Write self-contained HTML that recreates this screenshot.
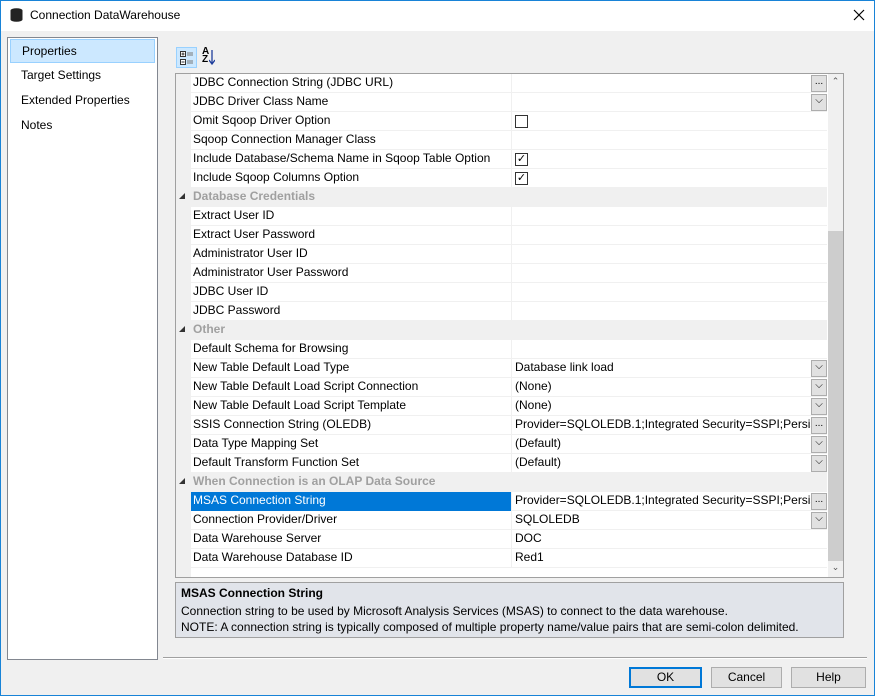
<!DOCTYPE html>
<html><head><style>
*{box-sizing:border-box;margin:0;padding:0}
body{width:875px;height:696px;overflow:hidden;font-family:"Liberation Sans",sans-serif;font-size:12px;color:#000;background:#f0f0f0;position:relative}
.win{position:absolute;left:0;top:0;width:875px;height:696px;background:#f0f0f0}
.frame{position:absolute;left:0;top:0;width:875px;height:696px;border:1px solid #1883d7;pointer-events:none}
.title{position:absolute;left:0;top:0;width:875px;height:31px;background:#fff}
.title span{position:absolute;left:30px;top:8px;font-size:12px}
.list{position:absolute;left:7px;top:37px;width:151px;height:623px;background:#fff;border:1px solid #828790}
.list div{height:25px;line-height:25px;padding-left:13px}
.list .sel{margin:1px 2px 0 2px;height:24px;background:#cce8ff;border:1px solid #99d1ff;padding-left:11px;line-height:22px}
.grid{position:absolute;left:175px;top:73px;width:669px;height:505px;background:#fff;border:1px solid #a0a0a0;overflow:hidden}
.margin{position:absolute;left:0;top:0;width:15px;height:503px;background:#f0f0f0}
.row{position:absolute;left:15px;width:636px;height:19px;border-bottom:1px solid #f0f0f0}
.row .n{position:absolute;left:2px;top:1px;white-space:nowrap}
.row .v{position:absolute;left:320px;top:0;width:316px;height:19px;border-left:1px solid #f0f0f0;padding-left:3px;padding-top:1px;white-space:nowrap;overflow:hidden}
.cat{background:#f0f0f0;border-bottom:none}
.cat .n{color:#a0a0a0;font-weight:bold}
.tri{position:absolute;left:-12px;top:5px;width:0;height:0;border-left:6px solid transparent;border-bottom:6px solid #333}
.sel .n{color:#fff}
.selbg{position:absolute;left:0;top:0;width:320px;height:19px;background:#0078d7}
.btn{position:absolute;right:0;top:1px;width:16px;height:17px;background:#e1e1e1;border:1px solid #adadad;font-size:10px;text-align:center;line-height:12px}
.cb{position:absolute;left:3px;top:3px;width:13px;height:13px;border:1px solid #333;background:#fff}
.sb{position:absolute;left:652px;top:0;width:15px;height:503px;background:#f0f0f0}
.thumb{position:absolute;left:0;top:157px;width:15px;height:330px;background:#cdcdcd}
.desc{position:absolute;left:175px;top:582px;width:669px;height:56px;background:#e1e4ea;border:1px solid #a0a0a0}
.desc b{position:absolute;left:5px;top:3px}
.desc p{position:absolute;left:5px;white-space:nowrap}
.sep{position:absolute;left:163px;top:657px;width:704px;height:2px;border-top:1px solid #a0a0a0;border-bottom:1px solid #fff}
.b{position:absolute;top:667px;height:21px;background:#e1e1e1;border:1px solid #adadad;text-align:center;line-height:19px}
</style></head><body><div class="win">
<div class="title">
<svg style="position:absolute;left:10px;top:8px" width="13" height="14" viewBox="0 0 13 14"><ellipse cx="6.5" cy="2.5" rx="6" ry="2.3" fill="#222"/><rect x="0.5" y="2.5" width="12" height="9" fill="#222"/><ellipse cx="6.5" cy="11.5" rx="6" ry="2.3" fill="#222"/></svg>
<span>Connection DataWarehouse</span>
<svg style="position:absolute;left:853px;top:9px" width="12" height="12"><path d="M1 1l10 10M11 1L1 11" stroke="#000" stroke-width="1.2"/></svg></div>
<div class="list"><div class="sel">Properties</div><div>Target Settings</div><div>Extended Properties</div><div>Notes</div></div>
<div style="position:absolute;left:176px;top:47px;width:21px;height:21px;background:#cce8ff;border:1px solid #99d1ff"></div>
<svg style="position:absolute;left:180px;top:51px" width="14" height="14" viewBox="0 0 14 14"><rect x="0.5" y="0.5" width="5" height="5" fill="#fff" stroke="#333"/><path d="M1.5 3h3M3 1.5v3" stroke="#333"/><rect x="0.5" y="8.5" width="5" height="5" fill="#fff" stroke="#333"/><path d="M1.5 11h3" stroke="#333"/><path d="M7 2h6M7 4h6M7 10h6M7 12h6" stroke="#777"/></svg>
<div style="position:absolute;left:202px;top:48px;font-size:10px;line-height:8px;font-weight:bold">A<br>Z</div>
<svg style="position:absolute;left:209px;top:50px" width="6" height="16"><path d="M3 0v13M0 10l3 4 3-4" stroke="#1f3e9c" stroke-width="1.3" fill="none"/></svg>
<div class="grid"><div class="margin"></div>
<div class="row" style="top:0"><span class="n">JDBC Connection String (JDBC URL)</span><div class="v"><div class="btn">...</div></div></div>
<div class="row" style="top:19px"><span class="n">JDBC Driver Class Name</span><div class="v"><div class="btn">⌵</div></div></div>
<div class="row" style="top:38px"><span class="n">Omit Sqoop Driver Option</span><div class="v"><div class="cb"></div></div></div>
<div class="row" style="top:57px"><span class="n">Sqoop Connection Manager Class</span><div class="v"></div></div>
<div class="row" style="top:76px"><span class="n">Include Database/Schema Name in Sqoop Table Option</span><div class="v"><div class="cb" style="font-size:11px;line-height:11px;text-align:center">✓</div></div></div>
<div class="row" style="top:95px"><span class="n">Include Sqoop Columns Option</span><div class="v"><div class="cb" style="font-size:11px;line-height:11px;text-align:center">✓</div></div></div>
<div class="row cat" style="top:114px"><div class="tri"></div><span class="n">Database Credentials</span></div>
<div class="row" style="top:133px"><span class="n">Extract User ID</span><div class="v"></div></div>
<div class="row" style="top:152px"><span class="n">Extract User Password</span><div class="v"></div></div>
<div class="row" style="top:171px"><span class="n">Administrator User ID</span><div class="v"></div></div>
<div class="row" style="top:190px"><span class="n">Administrator User Password</span><div class="v"></div></div>
<div class="row" style="top:209px"><span class="n">JDBC User ID</span><div class="v"></div></div>
<div class="row" style="top:228px"><span class="n">JDBC Password</span><div class="v"></div></div>
<div class="row cat" style="top:247px"><div class="tri"></div><span class="n">Other</span></div>
<div class="row" style="top:266px"><span class="n">Default Schema for Browsing</span><div class="v"></div></div>
<div class="row" style="top:285px"><span class="n">New Table Default Load Type</span><div class="v">Database link load<div class="btn">⌵</div></div></div>
<div class="row" style="top:304px"><span class="n">New Table Default Load Script Connection</span><div class="v">(None)<div class="btn">⌵</div></div></div>
<div class="row" style="top:323px"><span class="n">New Table Default Load Script Template</span><div class="v">(None)<div class="btn">⌵</div></div></div>
<div class="row" style="top:342px"><span class="n">SSIS Connection String (OLEDB)</span><div class="v">Provider=SQLOLEDB.1;Integrated Security=SSPI;Persist Security<div class="btn">...</div></div></div>
<div class="row" style="top:361px"><span class="n">Data Type Mapping Set</span><div class="v">(Default)<div class="btn">⌵</div></div></div>
<div class="row" style="top:380px"><span class="n">Default Transform Function Set</span><div class="v">(Default)<div class="btn">⌵</div></div></div>
<div class="row cat" style="top:399px"><div class="tri"></div><span class="n">When Connection is an OLAP Data Source</span></div>
<div class="row sel" style="top:418px"><div class="selbg"></div><span class="n">MSAS Connection String</span><div class="v">Provider=SQLOLEDB.1;Integrated Security=SSPI;Persist Security<div class="btn">...</div></div></div>
<div class="row" style="top:437px"><span class="n">Connection Provider/Driver</span><div class="v">SQLOLEDB<div class="btn">⌵</div></div></div>
<div class="row" style="top:456px"><span class="n">Data Warehouse Server</span><div class="v">DOC</div></div>
<div class="row" style="top:475px"><span class="n">Data Warehouse Database ID</span><div class="v">Red1</div></div>
<div class="sb"><div style="position:absolute;top:2px;width:15px;text-align:center;font-size:9px;color:#555">⌃</div><div class="thumb"></div><div style="position:absolute;top:488px;width:15px;text-align:center;font-size:9px;color:#555">⌄</div></div>
</div>
<div class="desc"><b>MSAS Connection String</b><p style="top:21px">Connection string to be used by Microsoft Analysis Services (MSAS) to connect to the data warehouse.</p><p style="top:37px">NOTE: A connection string is typically composed of multiple property name/value pairs that are semi-colon delimited.</p></div>
<div class="sep"></div>
<div class="b" style="left:629px;width:73px;border:2px solid #0078d7;line-height:17px">OK</div>
<div class="b" style="left:711px;width:71px">Cancel</div>
<div class="b" style="left:791px;width:75px">Help</div>
</div><div class="frame"></div></body></html>
